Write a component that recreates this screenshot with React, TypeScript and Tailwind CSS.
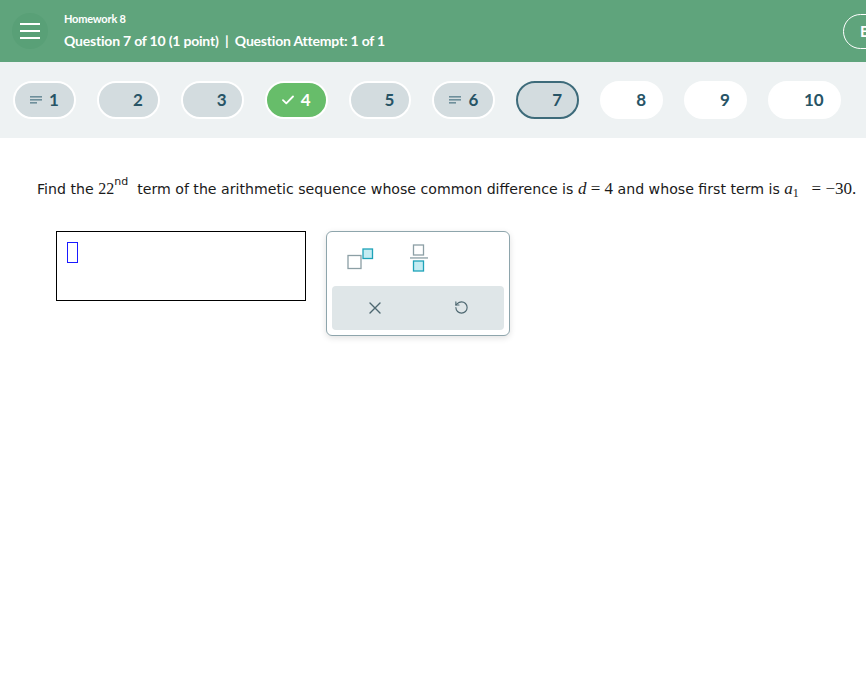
import React from "react";
import { RotateCcw } from "lucide-react";

const hdrFont = { fontFamily: "Lato, 'Open Sans', sans-serif" };

function LinesIcon({ color }: { color: string }) {
  return (
    <svg width="12" height="8" viewBox="0 0 12 8">
      <rect x="0" y="0" width="12" height="1.6" fill={color} />
      <rect x="0" y="3" width="12" height="1.6" fill={color} />
      <rect x="0" y="6" width="7" height="1.6" fill={color} />
    </svg>
  );
}

function CheckIcon() {
  return (
    <svg width="12" height="10" viewBox="0 0 12 10">
      <path d="M1 5.2 L4.3 8.4 L11 1.5" stroke="white" strokeWidth="1.8" fill="none" strokeLinecap="round" strokeLinejoin="round" />
    </svg>
  );
}

type PillKind = "grey" | "green" | "current" | "white";

function Pill({ n, kind, icon }: { n: number; kind: PillKind; icon?: "lines" | "check" }) {
  const base =
    "flex items-center h-[38px] rounded-full pl-[14px] pr-[15px] gap-[6px] text-[17px] font-bold border-2";
  const cls =
    kind === "grey"
      ? "bg-[#d3dcdf] border-white text-[#275466]"
      : kind === "green"
      ? "bg-[#67bd6a] border-white text-white"
      : kind === "current"
      ? "bg-[#d3dcdf] border-[#3d6b7a] text-[#275466]"
      : "bg-white border-white text-[#275466]";
  return (
    <div className={base + " " + cls} style={hdrFont}>
      <span className="w-[14px] flex items-center justify-center">
        {icon === "lines" && <LinesIcon color="#6e8f9b" />}
        {icon === "check" && <CheckIcon />}
      </span>
      <span>{n}</span>
    </div>
  );
}

export default function App() {
  return (
    <div className="w-[866px] h-[684px] bg-white overflow-hidden">
      {/* Header */}
      <div className="h-[62px] bg-[#5fa47c] flex items-center overflow-hidden">
        <div className="ml-[12px] w-[36px] h-[36px] rounded-full bg-[#59a077] flex flex-col items-center justify-center gap-[5px]">
          <div className="w-[20px] h-[2px] bg-white" />
          <div className="w-[20px] h-[2px] bg-white" />
          <div className="w-[20px] h-[2px] bg-white" />
        </div>
        <div className="ml-[16px] flex flex-col text-white" style={hdrFont}>
          <div className="text-[11px] font-bold leading-[14px] tracking-[-0.2px]">Homework 8</div>
          <div className="text-[14px] font-bold leading-[18px] mt-[6px] tracking-[-0.2px]">
            Question 7 of 10 (1 point)&nbsp;&nbsp;|&nbsp;&nbsp;Question Attempt: 1 of 1
          </div>
        </div>
        <div className="ml-auto mr-[-60px] shrink-0 h-[35px] w-[83px] rounded-full border-[1.5px] border-white flex items-center pl-[16px] text-white text-[15px] font-bold" style={hdrFont}>
          Exit
        </div>
      </div>

      {/* Question nav */}
      <div className="h-[76px] bg-[#eef2f3] flex items-center pl-[13px] gap-[21px]">
        <Pill n={1} kind="grey" icon="lines" />
        <Pill n={2} kind="grey" />
        <Pill n={3} kind="grey" />
        <Pill n={4} kind="green" icon="check" />
        <Pill n={5} kind="grey" />
        <Pill n={6} kind="grey" icon="lines" />
        <Pill n={7} kind="current" />
        <Pill n={8} kind="white" />
        <Pill n={9} kind="white" />
        <Pill n={10} kind="white" />
      </div>

      {/* Question */}
      <div className="pt-[38px] pl-[37px] whitespace-nowrap text-[14.15px] text-[#1a1a1a]" style={{ fontFamily: "'DejaVu Sans', Verdana, sans-serif" }}>
        Find the{" "}
        <span className="text-[16px]" style={{ fontFamily: "'Liberation Serif', serif" }}>22</span>
        <sup className="text-[11px] top-[-9px]">nd</sup>
        &nbsp; term of the arithmetic sequence whose common difference is{" "}
        <span className="text-[17px]" style={{ fontFamily: "'Liberation Serif', serif" }}>
          <i>d</i> = 4
        </span>{" "}
        and whose first term is{" "}
        <span className="text-[17px]" style={{ fontFamily: "'Liberation Serif', serif" }}>
          <i>a</i>
          <sub className="text-[12px]">1</sub>&nbsp;&nbsp; = −30.
        </span>
      </div>

      {/* Answer area */}
      <div className="flex items-start mt-[29px] pl-[56px]">
        <div className="w-[250px] h-[70px] border border-black pt-[10px] pl-[10px]">
          <div className="w-[11px] h-[21px] border border-[#1a1aff]" />
        </div>
        <div className="ml-[20px] w-[184px] h-[105px] rounded-[6px] border border-[#8ea5ac] bg-white shadow-[0_2px_6px_rgba(0,0,0,0.12)] px-[5px] pb-[5px] flex flex-col">
          <div className="flex h-[54px]">
            <div className="w-[58px] flex items-center justify-center">
              <svg width="28" height="22" viewBox="0 0 28 22">
                <rect x="1" y="7.5" width="13" height="13" fill="white" stroke="#8c9fa5" strokeWidth="1.3" />
                <rect x="16" y="1" width="9.5" height="9.5" fill="#c4ecf2" stroke="#1ea3b8" strokeWidth="1.3" />
              </svg>
            </div>
            <div className="w-[58px] flex items-center justify-center">
              <svg width="20" height="30" viewBox="0 0 20 30">
                <rect x="4.5" y="1" width="10" height="10" fill="white" stroke="#8c9fa5" strokeWidth="1.3" />
                <rect x="1" y="13.3" width="18" height="1.3" fill="#8c9fa5" />
                <rect x="4.5" y="17" width="10" height="10" fill="#c4ecf2" stroke="#1ea3b8" strokeWidth="1.3" />
              </svg>
            </div>
          </div>
          <div className="flex-1 rounded-[4px] bg-[#dfe6e8] flex">
            <div className="flex-1 flex items-center justify-center">
              <svg width="14" height="14" viewBox="0 0 14 14">
                <path d="M2 2 L12 12 M12 2 L2 12" stroke="#4d6770" strokeWidth="1.4" strokeLinecap="round" />
              </svg>
            </div>
            <div className="flex-1 flex items-center justify-center">
              <RotateCcw size={15} color="#4d6770" strokeWidth={1.8} />
            </div>
          </div>
        </div>
      </div>
    </div>
  );
}
